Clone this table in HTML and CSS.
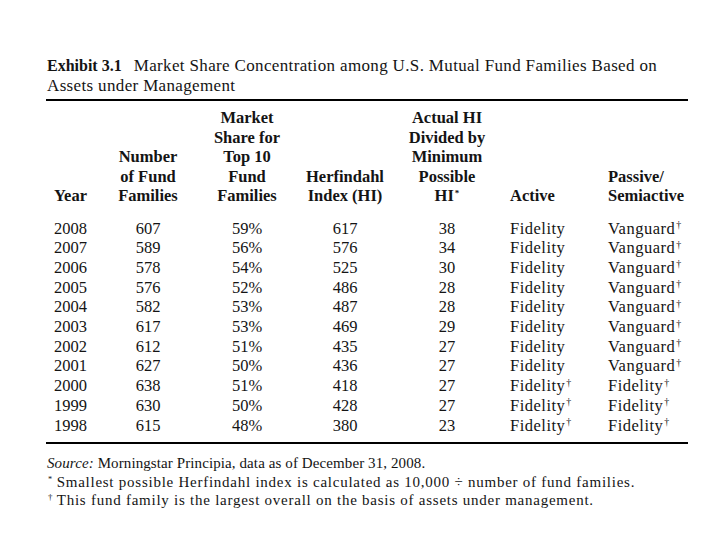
FILE: index.html
```html
<!DOCTYPE html>
<html>
<head>
<meta charset="utf-8">
<link rel="stylesheet" href="styles.css">
</head>
<body>
<div class="page">
  <h1 class="title">
    <span class="tline"><b class="ex">Exhibit 3.1</b><span class="ttl">Market Share Concentration among U.S. Mutual Fund Families Based on</span></span>
    <span class="tline">Assets under Management</span>
  </h1>
  <table class="tbl">
    <colgroup>
      <col class="c-year"><col class="c-num"><col class="c-share"><col class="c-hi"><col class="c-act"><col class="c-active"><col class="c-pass">
    </colgroup>
    <thead>
      <tr>
        <th class="left">Year</th>
        <th>Number<br>of Fund<br>Families</th>
        <th>Market<br>Share for<br>Top 10<br>Fund<br>Families</th>
        <th>Herfindahl<br>Index (HI)</th>
        <th>Actual HI<br>Divided by<br>Minimum<br>Possible<br>HI<sup class="ast">*</sup></th>
        <th class="left">Active</th>
        <th class="left">Passive/<br>Semiactive</th>
      </tr>
    </thead>
    <tbody>
      <tr><td class="left">2008</td><td>607</td><td>59%</td><td>617</td><td>38</td><td class="left name">Fidelity</td><td class="left name">Vanguard<sup>†</sup></td></tr>
      <tr><td class="left">2007</td><td>589</td><td>56%</td><td>576</td><td>34</td><td class="left name">Fidelity</td><td class="left name">Vanguard<sup>†</sup></td></tr>
      <tr><td class="left">2006</td><td>578</td><td>54%</td><td>525</td><td>30</td><td class="left name">Fidelity</td><td class="left name">Vanguard<sup>†</sup></td></tr>
      <tr><td class="left">2005</td><td>576</td><td>52%</td><td>486</td><td>28</td><td class="left name">Fidelity</td><td class="left name">Vanguard<sup>†</sup></td></tr>
      <tr><td class="left">2004</td><td>582</td><td>53%</td><td>487</td><td>28</td><td class="left name">Fidelity</td><td class="left name">Vanguard<sup>†</sup></td></tr>
      <tr><td class="left">2003</td><td>617</td><td>53%</td><td>469</td><td>29</td><td class="left name">Fidelity</td><td class="left name">Vanguard<sup>†</sup></td></tr>
      <tr><td class="left">2002</td><td>612</td><td>51%</td><td>435</td><td>27</td><td class="left name">Fidelity</td><td class="left name">Vanguard<sup>†</sup></td></tr>
      <tr><td class="left">2001</td><td>627</td><td>50%</td><td>436</td><td>27</td><td class="left name">Fidelity</td><td class="left name">Vanguard<sup>†</sup></td></tr>
      <tr><td class="left">2000</td><td>638</td><td>51%</td><td>418</td><td>27</td><td class="left name">Fidelity<sup>†</sup></td><td class="left name">Fidelity<sup>†</sup></td></tr>
      <tr><td class="left">1999</td><td>630</td><td>50%</td><td>428</td><td>27</td><td class="left name">Fidelity<sup>†</sup></td><td class="left name">Fidelity<sup>†</sup></td></tr>
      <tr class="last"><td class="left">1998</td><td>615</td><td>48%</td><td>380</td><td>23</td><td class="left name">Fidelity<sup>†</sup></td><td class="left name">Fidelity<sup>†</sup></td></tr>
    </tbody>
  </table>
  <div class="notes">
    <p class="src"><i>Source:</i> Morningstar Principia, data as of December 31, 2008.</p>
    <p><sup class="ast">*</sup> Smallest possible Herfindahl index is calculated as 10,000 ÷ number of fund families.</p>
    <p><sup>†</sup> This fund family is the largest overall on the basis of assets under management.</p>
  </div>
</div>
</body>
</html>
```
FILE: styles.css
```css
html, body {
  margin: 0;
  padding: 0;
  background: #fff;
}
body {
  font-family: "Liberation Serif", "Times New Roman", serif;
  color: #141414;
}
.page {
  width: 642px;
  padding: 56px 0 0 46px;
}
.title {
  margin: 0 0 0 1px;
  font-size: 17px;
  font-weight: normal;
  line-height: 20px;
  width: 630px;
  letter-spacing: 0.35px;
}
.tline {
  display: block;
  white-space: nowrap;
}
.title .ex {
  font-weight: bold;
  font-size: 16px;
  letter-spacing: 0;
  margin-right: 12px;
}
.tbl {
  margin-top: 3px;
  width: 642px;
  border-collapse: collapse;
  border-top: 2px solid #000;
  border-bottom: 2px solid #000;
  font-size: 16.5px;
  table-layout: fixed;
}
.c-year { width: 54px; }
.c-num { width: 96px; }
.c-share { width: 102px; }
.c-hi { width: 94px; }
.c-act { width: 110px; }
.c-active { width: 98px; }
.c-pass { width: 88px; }
.tbl th {
  font-weight: bold;
  line-height: 19.5px;
  vertical-align: bottom;
  text-align: center;
  padding: 7px 0 13px 0;
  white-space: nowrap;
}
.tbl td {
  text-align: center;
  line-height: 19.7px;
  padding: 0;
  white-space: nowrap;
}
.tbl .left {
  text-align: left;
  padding-left: 8px;
}
.tbl .name {
  letter-spacing: 0.5px;
}
.tbl tr.last td {
  padding-bottom: 7px;
}
sup {
  font-size: 0.6em;
  line-height: 0;
  vertical-align: 0.55em;
  margin-left: 1px;
  letter-spacing: 0;
}
sup.ast {
  font-size: 0.55em;
}
.notes {
  margin-top: 10px;
  font-size: 15px;
  line-height: 18.5px;
}
.notes p {
  margin: 0 0 0 1px;
  letter-spacing: 0.75px;
}
.notes p.src {
  letter-spacing: 0.1px;
}
```
